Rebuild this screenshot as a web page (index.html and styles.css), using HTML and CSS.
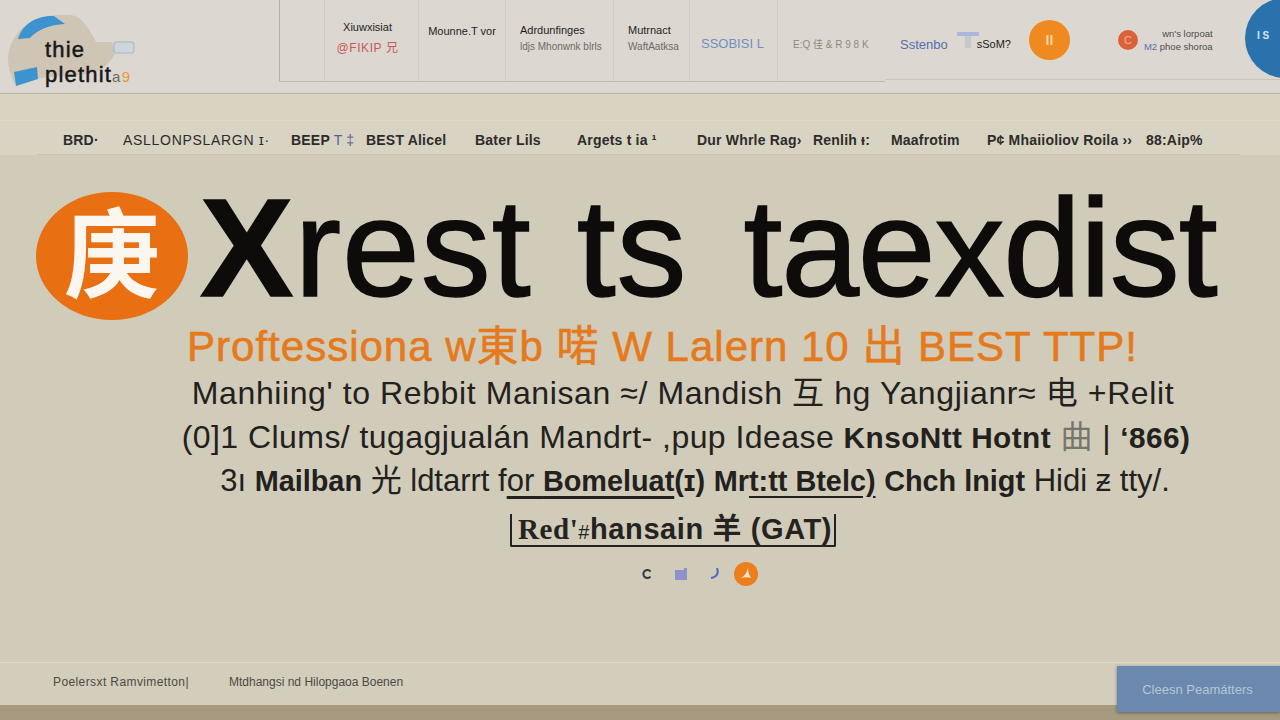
FILE: index.html
```html
<!DOCTYPE html>
<html lang="en">
<head>
<meta charset="UTF-8" />
<title>Xrest ts taexdist</title>
<link rel="stylesheet" href="styles.css">
</head>
<body>

<header class="top">
  <div class="brand">
    <svg class="brand-mark" width="140" height="94" viewBox="0 0 140 94">
      <path d="M8 56 C10 40 20 28 30 22 C42 16 60 13 76 16 C86 22 92 34 96 42 L112 42 L115 54 C108 66 100 72 88 74 L40 78 L16 86 C10 76 8 66 8 56 Z" fill="#cfc5b4"/>
      <path d="M18 39 C22 25 36 15 54 16 L65 24 C50 25 38 29 30 38 Z" fill="#3d93cf"/>
      <path d="M14 72 L37 67 L38 79 L16 86 Z" fill="#3d93cf"/>
      <rect x="114" y="42" width="20" height="11" rx="2" fill="#cdd6dc" stroke="#a6b4bf"/>
    </svg>
    <div class="brand-name">thie<br>plethit<span class="brand-tail">a<i>9</i></span></div>
  </div>

  <div class="tabs">
    <div class="tab tab-blank"></div>
    <div class="tab tab-a"><b>Xiuwxisiat</b><span class="red">@FIKIP 兄</span></div>
    <div class="tab tab-b"><b>Mounne.T vor</b></div>
    <div class="tab tab-c"><b>Adrdunfinges</b><span>ldjs Mhonwnk blrls</span></div>
    <div class="tab tab-d"><b>Mutrnact</b><span>WaftAatksa</span></div>
    <div class="tab tab-e"><em>SSOBISI L</em></div>
    <div class="tab tab-f"><span>E:Q 佳 &amp; R 9 8 K</span></div>
  </div>

  <div class="tools">
    <span class="tools-link">Sstenbo</span>
    <svg width="22" height="20" viewBox="0 0 22 20"><path d="M0 2h22v4H0z" fill="#a9b8d8"/><path d="M8 6h6v12H8z" fill="#c4c8c8"/></svg>
    <span class="tools-text">sSoM?</span>
    <span class="tools-badge">II</span>
    <span class="tools-dot">C</span>
    <div class="tools-lines"><span>wn's lorpoat</span><span><u>M2</u> phoe shoroa</span></div>
  </div>
  <div class="globe">I S</div>
</header>

<div class="band"></div>

<nav class="nav">
  <a>BRD·</a><a class="thin">ASLLONPSLARGN ɪ·</a><a>BEEP<i> T ‡</i></a><a>BEST Alicel</a><a>Bater Lils</a><a>Argets t ia ¹</a><a>Dur Whrle Rag›</a><a>Renlih ᵻ:</a><a>Maafrotim</a><a>P¢ Mhaiioliov Roila ››</a><a>88:Aip%</a>
</nav>

<main class="hero">
  <div class="title-row">
    <div class="title-mark">庚</div>
    <h1 class="title"><span class="title-x">X</span>rest ts <span class="title-last">taexdist</span></h1>
  </div>
  <p class="lead">Proftessiona w<i>東</i>b 喏 W Lalern 10 出 BEST TTP!</p>
  <p class="line line-1">Manhiing' to Rebbit Manisan ≈/ Mandish 互 hg Yangjianr≈ 电 +Relit</p>
  <p class="line line-2">(0]1 Clums/ tugagjualán Mandrt- ,pup Idease <b>KnsoNtt Hotnt</b> <span class="faint">曲</span> | <b>‘866)</b></p>
  <p class="line line-3">3ı <b class="semi">Mailban</b> 光 ldtarrt f<u>or <b>Bomeluat</b></u><b>(ɪ)</b> <b class="semi">Mr<u>t:tt Btelc)</u></b> <b class="semi">Chch lnigt</b> Hidi ᵶ tty/.</p>
  <div class="boxed"><span class="boxed-serif">Red'</span><span class="boxed-cjk">#</span>hansain 羊 (GAT)</div>
  <div class="pager">
    <svg width="12" height="12" viewBox="0 0 12 12"><path d="M9.5 3.5A4 4 0 1 0 9.5 8.5" fill="none" stroke="#33384a" stroke-width="2"/></svg>
    <svg width="14" height="14" viewBox="0 0 14 14"><path d="M1 3h9V1h3v12H1z" fill="#8d92cb"/></svg>
    <svg width="12" height="14" viewBox="0 0 12 14"><path d="M8 1c2 5 0 9-6 10" fill="none" stroke="#4d6fc0" stroke-width="2"/></svg>
    <span class="pager-on"><svg width="14" height="14" viewBox="0 0 14 14"><path d="M9 1C8 5 6 9 2 11c3-1 7-1 10 0-2-3-3-6-3-10z" fill="#f7e6d2"/></svg></span>
  </div>
</main>

<footer class="foot">
  <span class="foot-first">Poelersxt Ramvimetton|</span>
  <span>Mtdhangsi nd Hilopgaoa Boenen</span>
  <button class="foot-btn">Cleesn Peamátters</button>
</footer>
<div class="floor"></div>

</body>
</html>
```

FILE: styles.css
```css
* {
  box-sizing: border-box;
}
html, body {
  margin: 0;
  height: 720px;
  overflow: hidden;
}
body {
  display: flex;
  flex-direction: column;
  font-family: "Liberation Sans", "Noto Sans CJK SC", sans-serif;
  background-color: #d1cbb9;
  color: #1c1b19;
}
p {
  margin: 0;
}

/* top strip */
.top {
  height: 94px;
  flex: none;
  display: flex;
  background-color: #dcd8d1;
  border-bottom: 1px solid #b5b1a5;
  position: relative;
  overflow: hidden;
}
.brand {
  width: 279px;
  flex: none;
  position: relative;
}
.brand-mark {
  position: absolute;
  left: 0;
  top: 0;
}
.brand-name {
  position: absolute;
  left: 45px;
  top: 37px;
  font-size: 22px;
  line-height: 25px;
  letter-spacing: 1.2px;
  color: #17181a;
  -webkit-text-stroke: 0.5px #17181a;
}
.brand-tail {
  font-size: 15px;
  color: #6e6a60;
  -webkit-text-stroke: 0;
}
.brand-tail i {
  font-style: normal;
  color: #ef9433;
}
.tabs {
  display: flex;
  height: 82px;
  border-bottom: 1px solid #bdb9af;
  flex: none;
  width: 606px;
}
.tab {
  display: flex;
  flex-direction: column;
  justify-content: center;
  gap: 5px;
  padding-bottom: 5px;
  font-size: 10px;
  border-left: 1px solid #cfccc3;
  color: #6c6a66;
  white-space: nowrap;
}
.tab b {
  font-weight: normal;
  color: #1f1e1d;
  font-size: 11px;
}
.tab-blank {
  width: 45px;
  border-left-color: #b5b2a8;
}
.tab-a {
  width: 94px;
  align-items: center;
  padding-right: 8px;
}
.tab-a .red {
  color: #c25b58;
  font-size: 12px;
  letter-spacing: 0.6px;
}
.tab-b {
  width: 87px;
  align-items: center;
  padding-bottom: 20px;
}
.tab-c {
  width: 108px;
  padding-left: 14px;
}
.tab-d {
  width: 76px;
  padding-left: 14px;
}
.tab-e {
  width: 88px;
  padding: 6px 0 0 11px;
}
.tab-e em {
  font-style: normal;
  font-size: 13px;
  color: #6f8fc0;
}
.tab-f {
  width: 108px;
  padding: 6px 0 0 15px;
  font-size: 10px;
  color: #8b8a80;
}
.tools {
  flex: 1;
  display: flex;
  align-items: center;
  height: 80px;
  padding-left: 15px;
  border-bottom: 1px solid #c8c4ba;
  font-size: 11px;
}
.tools-link {
  color: #5470ad;
  font-size: 13px;
  padding-top: 9px;
  margin-right: 9px;
}
.tools-text {
  padding-top: 9px;
  margin-left: -2px;
}
.tools-badge {
  width: 41px;
  height: 40px;
  margin-left: 18px;
  border-radius: 50%;
  background-color: #ee8a1f;
  color: #f6d39b;
  font-weight: bold;
  font-size: 14px;
  display: flex;
  align-items: center;
  justify-content: center;
}
.tools-dot {
  width: 20px;
  height: 20px;
  margin-left: 48px;
  border-radius: 50%;
  background-color: #d9623b;
  color: #f0b59c;
  display: flex;
  align-items: center;
  justify-content: center;
}
.tools-lines {
  display: flex;
  flex-direction: column;
  align-items: flex-end;
  gap: 2px;
  margin-left: 6px;
  font-size: 9.5px;
  color: #4d4c4a;
  white-space: nowrap;
}
.tools-lines u {
  color: #5470ad;
  text-decoration: none;
}
.globe {
  position: absolute;
  left: 1245px;
  top: -2px;
  width: 80px;
  height: 80px;
  padding: 32px 0 0 12px;
  border-radius: 50%;
  background-color: #2a72ab;
  color: #d8e6f0;
  font-size: 10px;
  font-weight: bold;
}

.band {
  height: 26px;
  flex: none;
  background-color: #d9d3c1;
}

/* nav */
.nav {
  height: 35px;
  flex: none;
  display: grid;
  grid-template-columns: 60px 168px 75px 109px 102px 120px 116px 78px 96px 159px 57px;
  align-items: center;
  padding: 3px 0 0 63px;
  background-color: #d8d3c3;
  border-top: 1px solid #ded9ca;
  font-size: 14px;
  letter-spacing: 0.2px;
  font-weight: bold;
  color: #2d2c2a;
  white-space: nowrap;
  position: relative;
}
.nav::after {
  content: "";
  position: absolute;
  left: 37px;
  right: 40px;
  bottom: 0;
  border-bottom: 1px solid #c8c3b2;
}
.nav a.thin {
  font-weight: normal;
  letter-spacing: 0.7px;
}
.nav i {
  font-style: normal;
  font-weight: normal;
  color: #5c5f92;
}

/* main */
.hero {
  flex: 1;
  display: flex;
  flex-direction: column;
  align-items: center;
  text-align: center;
  white-space: nowrap;
}
.title-row {
  align-self: flex-start;
  display: flex;
  align-items: flex-start;
  height: 128px;
  margin-top: 37px;
  margin-left: 36px;
}
.title-mark {
  width: 152px;
  height: 128px;
  flex: none;
  border-radius: 50%;
  background-color: #e86f12;
  color: #fbf6ee;
  font-size: 96px;
  font-weight: bold;
  line-height: 128px;
  text-align: center;
}
.title {
  margin: 0 0 0 12px;
  font-size: 140px;
  font-weight: normal;
  line-height: 112px;
  letter-spacing: 1px;
  word-spacing: 5px;
  color: #0d0c0b;
  -webkit-text-stroke: 1.5px #0d0c0b;
}
.title-x {
  font-weight: bold;
}
.title-last {
  margin-left: 11px;
  letter-spacing: -1.2px;
}
.lead {
  margin-top: 5px;
  margin-left: 45px;
  font-size: 42px;
  line-height: 44px;
  letter-spacing: 1px;
  color: #e57a1c;
  -webkit-text-stroke: 0.6px #e57a1c;
}
.lead i {
  font-style: normal;
}
.line {
  font-size: 32px;
  line-height: 43.5px;
  color: #23211d;
}
.line-1 {
  margin-top: 3px;
  margin-left: 86px;
  letter-spacing: 0.6px;
}
.line-2 {
  margin-left: 92px;
  letter-spacing: 0.45px;
}
.line-3 {
  margin-left: 110px;
  font-size: 31px;
}
.line b {
  font-size: 0.93em;
}
.line u {
  text-underline-offset: 5px;
}
.semi {
  font-weight: bold;
}
.faint {
  color: #77766d;
}
.boxed {
  margin-top: 10px;
  margin-left: 66px;
  height: 33px;
  padding: 0 2px 0 6px;
  border: 2px solid #25231f;
  border-top: none;
  border-radius: 0 0 2px 2px;
  font-size: 29px;
  font-weight: bold;
  line-height: 30px;
  letter-spacing: 0.6px;
  color: #25231f;
}
.boxed-serif {
  font-family: "Liberation Serif", serif;
}
.boxed-cjk {
  font-weight: normal;
  font-size: 20px;
}
.pager {
  display: flex;
  align-items: center;
  gap: 21px;
  margin-top: 15px;
  margin-left: 118px;
}
.pager-on {
  width: 24px;
  height: 24px;
  margin-left: -8px;
  border-radius: 50%;
  background-color: #ea7f1c;
  display: flex;
  align-items: center;
  justify-content: center;
}

/* footer */
.foot {
  height: 43px;
  flex: none;
  display: flex;
  align-items: center;
  padding: 0 0 5px 53px;
  background-color: #d3cdbb;
  border-top: 1px solid #dcd7c7;
  font-size: 12px;
  color: #4c4a44;
  white-space: nowrap;
  position: relative;
}
.foot-first {
  width: 176px;
  flex: none;
  letter-spacing: 0.4px;
}
.foot-btn {
  position: absolute;
  left: 1117px;
  top: 3px;
  width: 163px;
  height: 46px;
  padding-right: 8px;
  border: none;
  background-color: #6b88ae;
  color: #b7c6d6;
  font-family: inherit;
  font-size: 13px;
  box-shadow: 0 1px 3px rgba(60,60,60,0.6);
}
.floor {
  height: 15px;
  flex: none;
  background-color: #a69a80;
}
```
